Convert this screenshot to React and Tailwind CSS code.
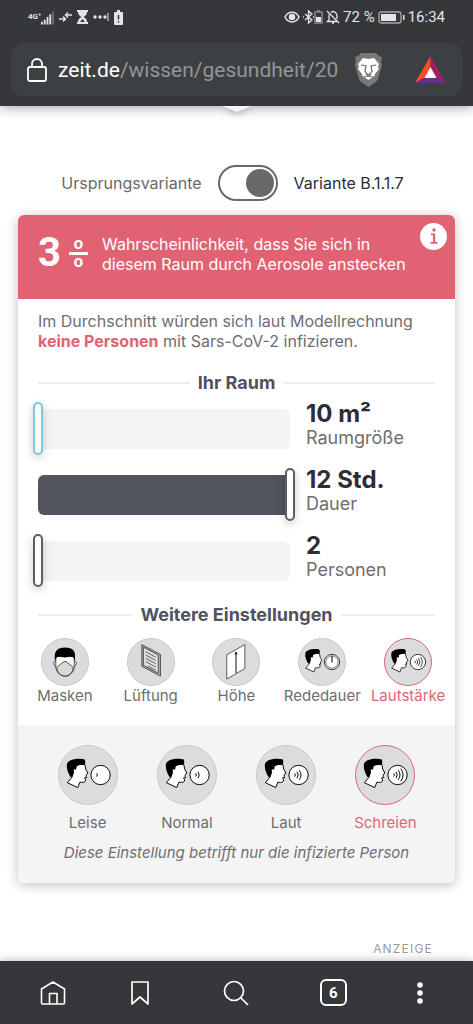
import { useState } from "react";

const WAVES = [
  "M117 85 Q121 90 117 95",
  "M124 80 Q132 90 124 100",
  "M131 75 Q142 90 131 105",
  "M139 70 Q153 90 139 110",
];

const SpeakerIcon = ({ waves = 0, clock = false }) => (
  <svg viewBox="0 0 180 180" className="w-full h-full" fill="none" aria-hidden="true">
    <path
      d="M50 60 C60 56 72 55 80 57 L83 72 L90 84 L85 88 L84 94 L86 98 L79 99 L83 105 C82 112 77 115 65 112 L58 129 L26 114 L41 96 L38 70 Z"
      fill="#fff"
      stroke="#000"
      strokeWidth="3"
      strokeLinejoin="round"
    />
    <path
      d="M25 55 C28 42 58 36 79 41 C83 47 82 54 79 58 C70 59 62 58 55 63 L53 74 C48 69 43 73 47 81 L43 93 L36 97 C28 84 22 68 25 55 Z"
      fill="#000"
    />
    <circle cx="129" cy="90" r="30" fill="#fff" stroke="#000" strokeWidth="3" />
    {clock && (
      <>
        <circle cx="129" cy="90" r="24" stroke="#000" strokeWidth="2" />
        <path d="M129 66 V92" stroke="#000" strokeWidth="4" />
      </>
    )}
    {WAVES.slice(0, waves).map((d) => (
      <path key={d} d={d} stroke="#000" strokeWidth="3" />
    ))}
  </svg>
);

const MaskIcon = () => (
  <svg viewBox="0 0 140 140" className="w-full h-full" aria-hidden="true">
    <path d="M41 68 C34 66 34 82 43 84 M99 68 C106 66 106 82 97 84" fill="#fff" stroke="#000" strokeWidth="2" />
    <path d="M42 52 H98 V88 C94 104 82 113 70 113 C58 113 46 104 42 88 Z" fill="#fff" stroke="#000" strokeWidth="2" />
    <path
      d="M45 86 L62 72 Q70 64 78 72 L95 86 C95 100 85 112 70 113 C55 112 45 100 45 86 Z"
      fill="#dcd9d2"
      stroke="#000"
      strokeWidth="2"
    />
    <path d="M40 68 C34 36 48 26 70 26 C93 26 106 36 99 68 L96 56 C88 52 80 56 70 56 C60 56 52 51 44 56 Z" />
  </svg>
);

const VentIcon = () => (
  <svg viewBox="0 0 140 140" className="w-full h-full" fill="none" stroke="#222" strokeWidth="2" aria-hidden="true">
    <path d="M42 17 L99 47 V113 L42 83 Z" fill="#a9a9ac" />
    <path d="M47 25 L92 49 V104 L47 80 Z" fill="#dededf" />
    <path d="M54 39 L84 55 M54 49 L84 65 M54 59 L84 75 M54 69 L84 85 M60 82 L84 95" />
  </svg>
);

const HeightIcon = () => (
  <svg viewBox="0 0 140 140" className="w-full h-full" fill="none" stroke="#111" strokeWidth="2" aria-hidden="true">
    <path d="M42 48 L97 17 V90 L42 122 Z" fill="#fff" />
    <path d="M70 104 V42" strokeWidth="3" />
    <path d="M67 46 L70 39 L73 46 Z" fill="#111" />
  </svg>
);

const SETTINGS = [
  { name: "Masken", icon: <MaskIcon /> },
  { name: "Lüftung", icon: <VentIcon /> },
  { name: "Höhe", icon: <HeightIcon /> },
  { name: "Rededauer", icon: <SpeakerIcon clock /> },
  { name: "Lautstärke", icon: <SpeakerIcon waves={4} /> },
];

const VOLUMES = [
  { name: "Leise", waves: 1 },
  { name: "Normal", waves: 2 },
  { name: "Laut", waves: 3 },
  { name: "Schreien", waves: 4 },
];

const StatusBar = () => (
  <div className="h-[34px] flex items-center justify-between px-7 text-[#e3e4e6] text-[15px] leading-5">
    <div className="flex items-center gap-[5px]">
      <div className="flex items-end">
        <span className="text-[8px] leading-4 font-bold">4G⁺</span>
        <svg width="13" height="14" viewBox="0 0 14 14" fill="currentColor" aria-hidden="true">
          <path d="M0 11h2v3H0zM3 9h2v5H3zM6 6h2v8H6zM9 3h2v11H9z" />
          <path d="M12 0h2v14h-2z" opacity=".3" />
        </svg>
      </div>
      <svg width="13" height="10" viewBox="0 0 13 10" fill="none" stroke="currentColor" strokeWidth="1.4" aria-hidden="true">
        <path d="M0 7h6M4 4.500l2.500 2.500L4 9.500M13 3H7M9 .5L6.500 3L9 5.500" />
      </svg>
      <svg width="11" height="14" viewBox="0 0 11 14" fill="currentColor" aria-hidden="true">
        <path d="M0 0h11v2H0zM0 12h11v2H0zM1 2h9c0 3-2 4-3.500 5C8 8 10 9 10 12H8L5.500 9L3 12H1c0-3 2-4 3.500-5C3 6 1 5 1 2z" />
      </svg>
      <svg width="16" height="8" viewBox="0 0 16 8" fill="currentColor" aria-hidden="true">
        <circle cx="2" cy="4" r="1.700" />
        <circle cx="7" cy="4" r="1.700" />
        <circle cx="12" cy="4" r="1.700" />
        <path d="M14.500 0h1v8h-1z" />
      </svg>
      <svg width="9" height="15" viewBox="0 0 9 15" aria-hidden="true">
        <path d="M3 0h3v2h2q1 0 1 1v11q0 1-1 1H1q-1 0-1-1V3q0-1 1-1h2z" fill="currentColor" />
        <path d="M4.500 5v4.500M4.500 11v1.500" stroke="#36373b" strokeWidth="1.500" />
      </svg>
    </div>
    <div className="flex items-center gap-[3px]">
      <svg width="16" height="12" viewBox="0 0 16 12" fill="none" stroke="currentColor" strokeWidth="1.500" aria-hidden="true">
        <path d="M1 6C4-.5 12-.5 15 6C12 12.500 4 12.500 1 6Z" />
        <circle cx="8" cy="6" r="2.500" fill="currentColor" />
      </svg>
      <div className="flex items-center">
        <svg width="11" height="14" viewBox="0 0 11 14" fill="none" stroke="currentColor" strokeWidth="1.300" aria-hidden="true">
          <path d="M2 4l7 6l-3.500 3V1L9 4L2 10M0 7h1M10 7h1" />
        </svg>
        <svg width="9" height="14" viewBox="0 0 9 14" aria-hidden="true">
          <path d="M1 2h7v11H1zM3 1h3" fill="none" stroke="#8a8b8e" strokeWidth="1.500" />
          <path d="M2 7h5v5H2z" fill="currentColor" />
        </svg>
      </div>
      <svg width="14" height="14" viewBox="0 0 14 14" fill="none" stroke="currentColor" strokeWidth="1.300" aria-hidden="true">
        <path d="M1 1l12 12M3 4.500V10L1.500 11.500H11M5 2.500C8 0 11 3 11 6v3M6 13h2" />
      </svg>
      <span>72 %</span>
      <svg width="27" height="13" viewBox="0 0 27 13" aria-hidden="true">
        <rect x="1" y="1" width="22" height="11" rx="2" fill="none" stroke="#aaabad" strokeWidth="1.300" />
        <path d="M3 3h15v7H3zM25 4h1.500v5H25z" fill="currentColor" />
      </svg>
      <span>16:34</span>
    </div>
  </div>
);

const BrowserHeader = () => (
  <header className="relative z-10 bg-[#36373b] pb-2.5 shadow-[0_1px_12px_rgba(0,0,0,0.4)] font-[Roboto,sans-serif]">
    <StatusBar />
    <div className="mx-[11px] mt-[9px] h-[53px] rounded-xl bg-[#3d4043] flex items-center px-4">
      <svg width="20" height="24" viewBox="0 0 20 24" fill="none" stroke="#fff" strokeWidth="1.800" className="shrink-0" aria-hidden="true">
        <rect x="1" y="9" width="18" height="14" rx="2" />
        <path d="M5 9V6a5 5 0 0 1 10 0v3" />
      </svg>
      <button
        type="button"
        className="ml-[11px] mr-3 flex-1 min-w-0 overflow-hidden whitespace-nowrap text-left text-[21px] leading-7 text-[#939598]">
        <span className="text-white">zeit.de</span>/wissen/gesundheit/20
      </button>
      <button type="button" aria-label="Schutz" className="shrink-0">
        <svg width="29" height="34" viewBox="0 0 29 34" aria-hidden="true">
          <path d="M7 0h15l3 3l3 1l-1 5l1 3l-4 14q-1 3-9.500 8Q6 29 5 26L1 12l1-3l-1-5l3-1z" fill="#77787a" />
          <path
            d="M9 5l5.500 1L20 5l5 6l-1 3l1 2l-4 5l-.5 2l-6 4l-6-4l-.5-2l-4-5l1-2l-1-3z"
            fill="#fff"
          />
          <path
            d="M7 12l5 1l-1 5l2 3h3l2-3l-1-5l5-1M12 21l2.500 2l2.500-2M10 24l4.500-1l4.500 1"
            fill="none"
            stroke="#66676a"
            strokeWidth="1.200"
          />
        </svg>
      </button>
      <button type="button" aria-label="Brave Rewards" className="ml-8 shrink-0">
        <svg width="31" height="27" viewBox="0 0 31 27" aria-hidden="true">
          <path d="M15.500 0L0 27L10 22L15.500 11Z" fill="#ff4a22" />
          <path d="M15.500 0L31 27L21 22L15.500 11Z" fill="#9e1f63" />
          <path d="M0 27H31L21 21H10Z" fill="#662d91" />
          <path d="M15.500 11L21.500 22H9.500Z" fill="#fff" />
        </svg>
      </button>
    </div>
  </header>
);

const SectionTitle = ({ children }) => (
  <div className="flex items-center gap-2 px-5">
    <span className="h-0.5 flex-1 bg-[#ededee]" />
    <h2 className="font-bold text-lg leading-6 text-[#50525e]">{children}</h2>
    <span className="h-0.5 flex-1 bg-[#ededee]" />
  </div>
);

const RoomSlider = ({ id, label, min, max, initial, format, active }) => {
  const [value, setValue] = useState(initial);
  const percent = ((value - min) / (max - min)) * 100;

  return (
    <div className="flex items-center gap-4 pl-5 pr-4">
      <div className="grid flex-1 items-center">
        <div className="col-start-1 row-start-1 h-10 rounded-md bg-[#f4f4f4] overflow-hidden">
          <div className="h-full bg-[#52545f]" style={{ width: `${percent}%` }} />
        </div>
        <input
          id={id}
          type="range"
          min={min}
          max={max}
          value={value}
          onChange={(e) => setValue(Number(e.target.value))}
          className={`col-start-1 row-start-1 -mx-[5px] h-[53px] w-[calc(100%+10px)] appearance-none bg-transparent outline-none [&::-webkit-slider-thumb]:appearance-none [&::-webkit-slider-thumb]:w-2.5 [&::-webkit-slider-thumb]:h-[53px] [&::-webkit-slider-thumb]:rounded-full [&::-webkit-slider-thumb]:bg-white [&::-webkit-slider-thumb]:border-2 [&::-webkit-slider-thumb]:shadow-[0_3px_10px_rgba(0,0,0,0.2)] ${
            active ? "[&::-webkit-slider-thumb]:border-[#7cc8dc]" : "[&::-webkit-slider-thumb]:border-[#5c5e68]"
          }`}
        />
      </div>
      <div className="w-[133px] pb-[5px]">
        <div className="font-bold text-2xl leading-6 text-[#2c2d35]">{format(value)}</div>
        <label htmlFor={id} className="block text-lg leading-6 text-[#6e6e70]">
          {label}
        </label>
      </div>
    </div>
  );
};

const BrowserFooter = () => (
  <footer className="relative z-10 h-[63px] px-3.5 bg-[#36373b] shadow-[0_-1px_8px_rgba(0,0,0,0.25)] grid grid-cols-[4fr_5fr_5fr_5fr_4fr] items-center justify-items-center">
    <button type="button" aria-label="Startseite">
      <svg width="26" height="26" viewBox="0 0 26 26" fill="none" stroke="#fff" strokeWidth="1.600" strokeLinejoin="round" aria-hidden="true">
        <path d="M1.500 9L13 2L24.500 9V23Q24.500 24 23.500 24H2.500Q1.500 24 1.500 23ZM9.500 24V13.500H17V24" />
      </svg>
    </button>
    <button type="button" aria-label="Lesezeichen">
      <svg width="18" height="26" viewBox="0 0 18 26" fill="none" stroke="#fff" strokeWidth="1.700" strokeLinejoin="round" aria-hidden="true">
        <path d="M1 2H17V24L9 17L1 24Z" />
      </svg>
    </button>
    <button type="button" aria-label="Suchen">
      <svg width="26" height="26" viewBox="0 0 26 26" fill="none" stroke="#fff" strokeWidth="1.700" aria-hidden="true">
        <circle cx="11" cy="11" r="9.500" />
        <path d="M17.500 17.500L25 25" />
      </svg>
    </button>
    <button
      type="button"
      aria-label="6 Tabs"
      className="w-[27px] h-[27px] rounded-md border-2 border-white text-white font-bold text-[15px] leading-5 font-[Roboto,sans-serif] flex items-center justify-center">
      6
    </button>
    <button type="button" aria-label="Menü">
      <svg width="6" height="22" viewBox="0 0 6 22" fill="#fff" aria-hidden="true">
        <circle cx="3" cy="3" r="2.800" />
        <circle cx="3" cy="11" r="2.800" />
        <circle cx="3" cy="19" r="2.800" />
      </svg>
    </button>
  </footer>
);

const App = () => {
  const [setting, setSetting] = useState("Lautstärke");
  const [volume, setVolume] = useState("Schreien");

  return (
    <div className="min-h-screen flex flex-col bg-white font-[Inter,sans-serif]">
      <BrowserHeader />

      <main className="flex-1 flex flex-col">
        <svg width="46" height="9" viewBox="0 0 46 9" className="mx-auto overflow-visible drop-shadow-[0_2px_3px_rgba(0,0,0,0.3)] relative z-20" aria-hidden="true">
          <path d="M8 0H38L23 6Z" fill="#f4f4f4" />
        </svg>

        <div className="mt-[50px] pr-2 flex items-center justify-center gap-4 text-base text-[#69696b]">
          <span>Ursprungsvariante</span>
          <input
            id="variant"
            type="checkbox"
            role="switch"
            defaultChecked
            className="appearance-none shrink-0 w-[60px] h-9 rounded-full border-2 border-[#68696b] p-0.5 flex items-center before:block before:w-7 before:h-7 before:rounded-full before:bg-[#68696b] checked:justify-end"
          />
          <label htmlFor="variant" className="text-[#2c2d35]">
            Variante B.1.1.7
          </label>
        </div>

        <section className="mx-[18px] mt-3.5 rounded-md bg-white shadow-[0_2px_12px_rgba(0,0,0,0.25)]">
          <div className="h-[84px] rounded-t-md bg-[#e16373] text-white flex items-start pl-5 pr-2 pt-2">
            <span className="font-bold text-[40px] leading-[60px] font-[Roboto,sans-serif]">3</span>
            <div className="ml-2 mt-3.5 flex flex-col items-center font-bold text-base leading-[13px]" role="img" aria-label="Prozent">
              <span>o</span>
              <span className="mt-0.5 w-[19px] h-[3px] bg-white" />
              <span>o</span>
            </div>
            <p className="ml-3.5 mt-[11px] flex-1 whitespace-nowrap text-base leading-5">
              Wahrscheinlichkeit, dass Sie sich in
              <br />
              diesem Raum durch Aerosole anstecken
            </p>
            <button
              type="button"
              aria-label="Information"
              className="w-[27px] h-[27px] shrink-0 rounded-full bg-white flex items-center justify-center">
              <svg width="8" height="17" viewBox="0 0 8 17" fill="#e16373" aria-hidden="true">
                <circle cx="4" cy="2" r="1.700" />
                <path d="M1 5.500h4.200V14H7.500v1.700H.5V14H3V7.200H1z" />
              </svg>
            </button>
          </div>

          <p className="px-5 pt-3 text-base leading-5 text-[#6e6e70]">
            Im Durchschnitt würden sich laut Modellrechnung{" "}
            <strong className="text-[#e16373]">keine Personen</strong> mit Sars-CoV-2 infizieren.
          </p>

          <div className="pt-5">
            <SectionTitle>Ihr Raum</SectionTitle>
          </div>
          <div className="mt-[7px] flex flex-col gap-[13px]">
            <RoomSlider id="size" label="Raumgröße" min={10} max={200} initial={10} format={(v) => `${v} m²`} active />
            <RoomSlider id="duration" label="Dauer" min={1} max={12} initial={12} format={(v) => `${v} Std.`} />
            <RoomSlider id="people" label="Personen" min={2} max={50} initial={2} format={(v) => `${v}`} />
          </div>

          <div className="pt-4">
            <SectionTitle>Weitere Einstellungen</SectionTitle>
          </div>
          <div className="grid grid-cols-5 px-1 pt-[11px] pb-[19px]">
            {SETTINGS.map(({ name, icon }) => (
              <button
                key={name}
                type="button"
                onClick={() => setSetting(name)}
                className={`flex flex-col items-center text-[15px] leading-5 ${
                  setting === name ? "text-[#dd6676]" : "text-[#6e6e70]"
                }`}>
                <span
                  className={`block w-12 h-12 rounded-full bg-[#dcdcde] border ${
                    setting === name ? "border-[#dd6676]" : "border-[#c8c8ca]"
                  }`}>
                  {icon}
                </span>
                {name}
              </button>
            ))}
          </div>

          <div className="rounded-b-md bg-[#f4f4f4] p-5">
            <div className="grid grid-cols-4">
              {VOLUMES.map(({ name, waves }) => (
                <button
                  key={name}
                  type="button"
                  onClick={() => setVolume(name)}
                  className={`flex flex-col items-center gap-2 text-[15px] leading-5 ${
                    volume === name ? "text-[#dd6676]" : "text-[#6e6e70]"
                  }`}>
                  <span
                    className={`block w-[60px] h-[60px] rounded-full bg-[#dcdcde] border ${
                      volume === name ? "border-[#dd6676]" : "border-[#c8c8ca]"
                    }`}>
                    <SpeakerIcon waves={waves} />
                  </span>
                  {name}
                </button>
              ))}
            </div>
            <p className="mt-2.5 text-center text-[15px] leading-5 italic text-[#6e6e70]">
              Diese Einstellung betrifft nur die infizierte Person
            </p>
          </div>
        </section>

        <div className="mt-auto pr-10 pb-1 text-right text-xs leading-4 tracking-widest text-[#9b9b9d]">ANZEIGE</div>
      </main>

      <BrowserFooter />
    </div>
  );
};

export default App;
